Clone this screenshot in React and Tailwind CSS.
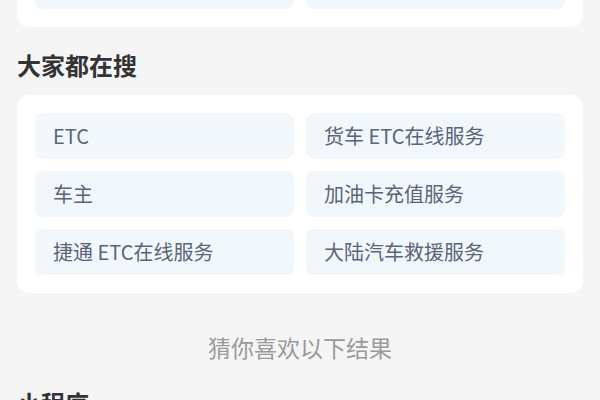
const prevRow = ["", ""];

const hotSearches = [
  "ETC",
  "货车 ETC在线服务",
  "车主",
  "加油卡充值服务",
  "捷通 ETC在线服务",
  "大陆汽车救援服务",
];

function Chip({ label }) {
  return (
    <div className="h-[46px] rounded-[8px] bg-[#f2f7fc] flex items-center pl-[18px] text-[20px] text-[#5a6578] truncate">
      {label}
    </div>
  );
}

export default function App() {
  return (
    <div
      className="h-[400px] overflow-hidden bg-[#f5f5f5] px-[17px]"
      style={{ fontFamily: '"Noto Sans CJK SC", "Noto Sans", sans-serif' }}
    >
      {/* previous section, mostly scrolled away */}
      <div className="-mt-[55px] bg-white rounded-[12px] p-[18px] grid grid-cols-2 gap-x-[12px]">
        {prevRow.map((l, i) => (
          <Chip key={i} label={l} />
        ))}
      </div>

      <h2 className="mt-[22px] mb-[14px] h-[32px] leading-[32px] text-[24px] font-semibold text-[#333333]">
        大家都在搜
      </h2>

      <div className="bg-white rounded-[12px] p-[18px] grid grid-cols-2 gap-x-[12px] gap-y-[12px]">
        {hotSearches.map((l) => (
          <Chip key={l} label={l} />
        ))}
      </div>

      <p className="mt-[39px] h-[30px] leading-[30px] text-center text-[23px] text-[#9a9a9a]">
        猜你喜欢以下结果
      </p>

      <h2 className="mt-[25px] h-[32px] leading-[32px] text-[24px] font-semibold text-[#333333]">
        小程序
      </h2>
    </div>
  );
}
